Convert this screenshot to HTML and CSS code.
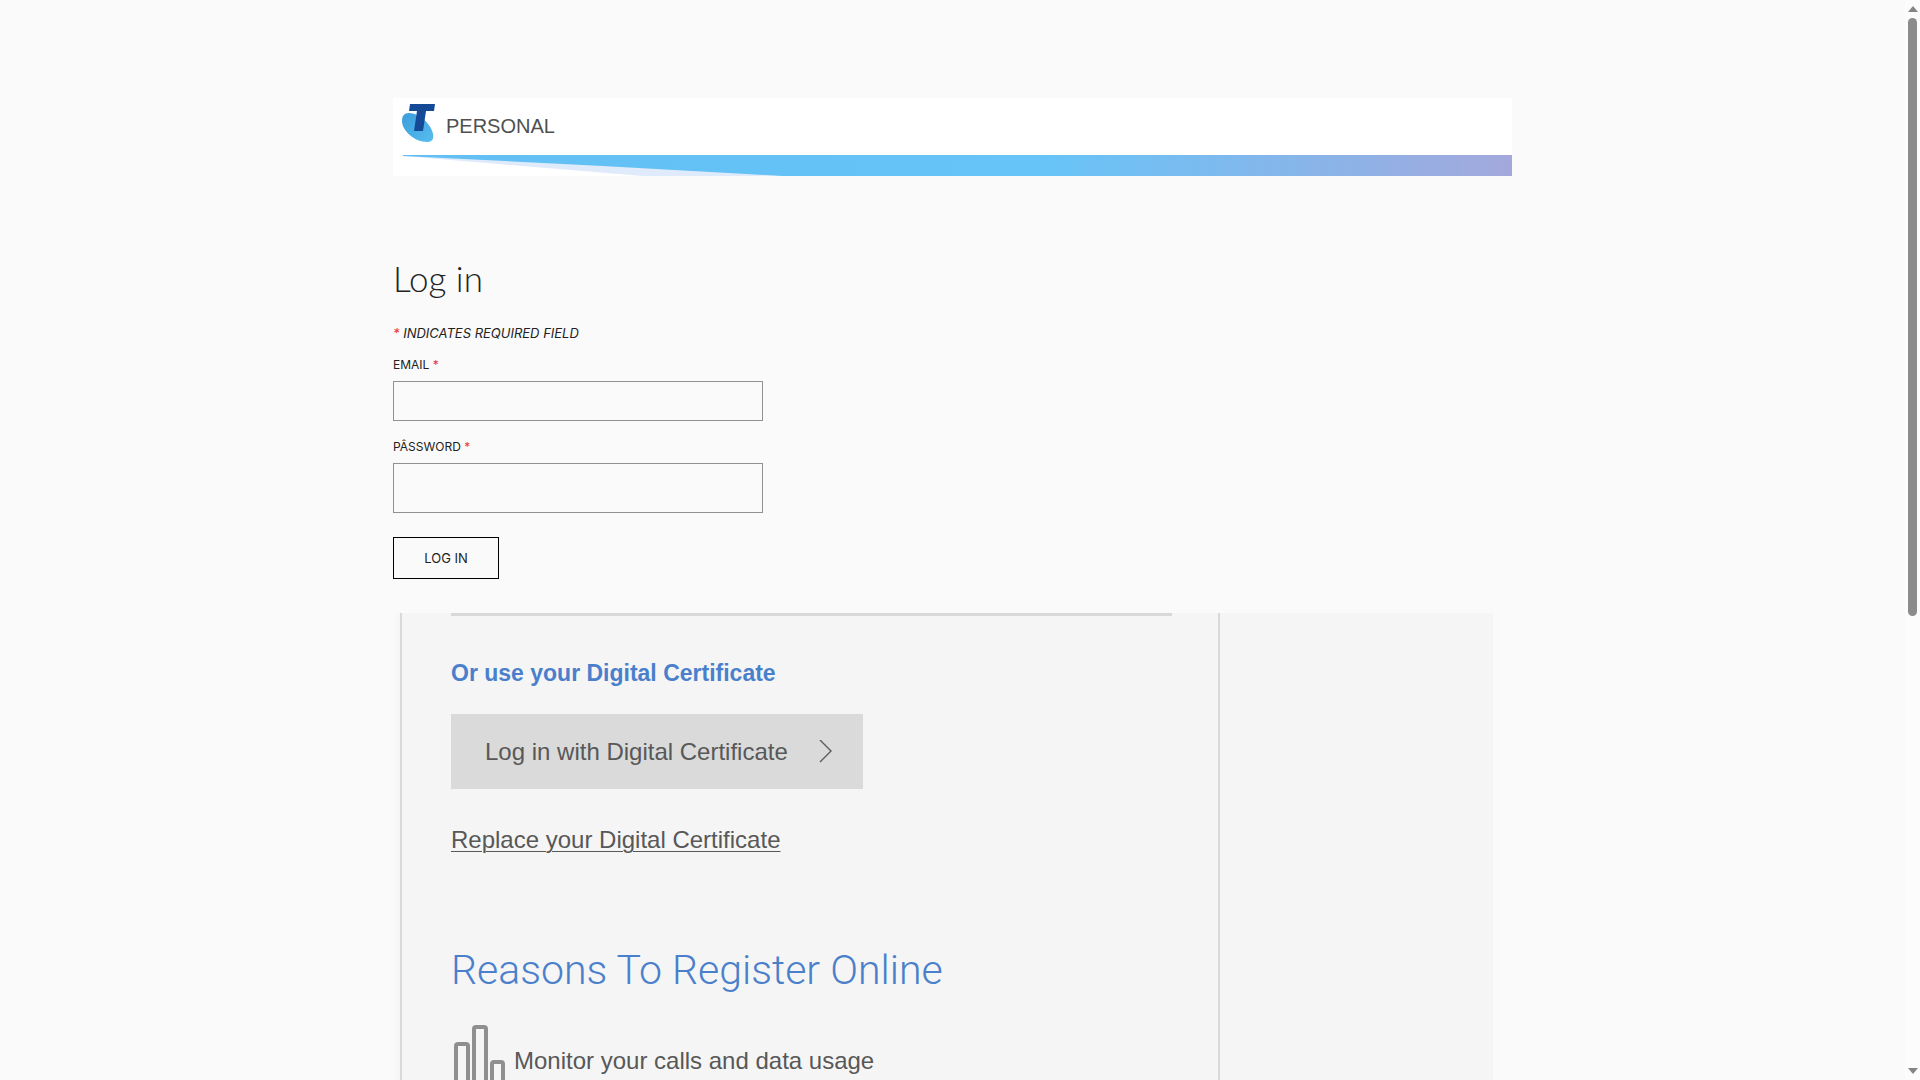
FILE: index.html
```html
<!DOCTYPE html>
<html lang="en">
<head>
<meta charset="utf-8">
<meta name="viewport" content="width=device-width, initial-scale=1">
<title>Log in</title>
<link rel="stylesheet" href="styles.css">
</head>
<body>
<div class="viewport">
  <div class="page">
    <header class="banner">
      <div class="brand">
        <svg class="logo" viewBox="0 0 34 40" aria-hidden="true">
          <defs>
            <linearGradient id="disc" x1="0" y1="0" x2="1" y2="1">
              <stop offset="0" stop-color="#3d9ddb"/>
              <stop offset="1" stop-color="#55bdf0"/>
            </linearGradient>
          </defs>
          <path fill="url(#disc)" d="M7 9C2 9 0 12 0 17C0 27 13 38 25 38C30 38 32 35 31 30C29 20 17 9 7 9Z"/>
          <path fill="#154a97" d="M8 0H33L32 7H24L21 27H12L15 7H7Z"/>
        </svg>
        <span class="brand-name">PERSONAL</span>
      </div>
      <svg class="ribbon" viewBox="0 0 1120 21" preserveAspectRatio="none" aria-hidden="true">
        <defs>
          <linearGradient id="band" x1="0" y1="0" x2="1" y2="0">
            <stop offset="0" stop-color="#61bff4"/>
            <stop offset="0.57" stop-color="#66c4f8"/>
            <stop offset="0.83" stop-color="#8ab4e8"/>
            <stop offset="1" stop-color="#a4a8dc"/>
          </linearGradient>
        </defs>
        <path fill="#dfeafa" d="M10 1L250 21H400V1Z"/>
        <path fill="url(#band)" d="M10 0H1120V21H390L210 11L10 1Z"/>
      </svg>
    </header>

    <main>
      <form class="login">
        <h1 class="title">Log in</h1>
        <p class="hint"><span class="req">*</span> INDICATES REQUIRED FIELD</p>
        <label class="label" for="email">EMAIL <span class="req">*</span></label>
        <input class="field" id="email" type="email">
        <label class="label" for="password">PÂSSWORD <span class="req">*</span></label>
        <input class="field field-tall" id="password" type="password">
        <button class="submit" type="submit">LOG IN</button>
      </form>

      <section class="panel">
        <div class="panel-body">
          <hr class="rule">
          <h2 class="cert-title">Or use your Digital Certificate</h2>
          <button class="cert-button" type="button">
            <span>Log in with Digital Certificate</span>
            <svg class="chevron" viewBox="0 0 14 24" aria-hidden="true"><path d="M1 0L12 11L1 22" fill="none" stroke="#5a5a5a" stroke-width="1.4"/></svg>
          </button>
          <a class="cert-link" href="#replace">Replace your Digital Certificate</a>
          <h2 class="reasons-title">Reasons To Register Online</h2>
          <div class="reason">
            <svg class="bars" viewBox="0 0 54 66" fill="none" stroke="#8f8f8f" stroke-width="4" aria-hidden="true">
              <rect x="5" y="20" width="12" height="40" rx="2"/>
              <rect x="23" y="3" width="12" height="57" rx="2"/>
              <rect x="41" y="38" width="11" height="22" rx="2"/>
            </svg>
            <span>Monitor your calls and data usage</span>
          </div>
        </div>
      </section>
    </main>
  </div>
  <div class="scrollbar" aria-hidden="true">
    <svg class="arrow" viewBox="0 0 10 6"><path fill="#858585" d="M5 0L10 6H0Z"/></svg>
    <div class="track"><div class="thumb"></div></div>
    <svg class="arrow" viewBox="0 0 10 6"><path fill="#858585" d="M0 0H10L5 6Z"/></svg>
  </div>
</div>
</body>
</html>
```

FILE: styles.css
```css
* {
  box-sizing: border-box;
}

body {
  margin: 0;
  background: #fafafa;
  color: #222;
  font-family: "Liberation Sans", Arial, sans-serif;
}

.viewport {
  display: flex;
  height: 100vh;
  overflow: hidden;
}

.page {
  flex: 1;
  min-width: 0;
  padding: 98px 24px 0;
}

.banner,
main {
  max-width: 1119px;
  margin: 0 auto;
}

.banner {
  background: #fff;
}

.brand {
  display: flex;
  gap: 10px;
  height: 57px;
  padding: 6px 9px 0;
}

.logo {
  width: 34px;
  height: 40px;
}

.brand-name {
  color: #505050;
  font-size: 20px;
  line-height: 45px;
}

.ribbon {
  display: block;
  width: 100%;
  height: 21px;
}

.login {
  display: flex;
  flex-direction: column;
  align-items: flex-start;
  padding-top: 81px;
  font-family: Inter, sans-serif;
}

.title {
  margin: 0 0 26px;
  font-family: Lato, sans-serif;
  font-size: 35px;
  font-weight: 300;
  line-height: 42px;
}

.hint {
  margin: 0 0 16px;
  font-size: 13px;
  font-style: italic;
  line-height: 16px;
}

.req {
  color: #f0303c;
}

.label {
  margin-bottom: 8px;
  font-size: 12px;
  line-height: 16px;
}

.field {
  width: 370px;
  max-width: 100%;
  height: 40px;
  margin-bottom: 18px;
  padding: 0 12px;
  border: 1px solid #919191;
  border-radius: 0;
  background: transparent;
  font: inherit;
}

.field-tall {
  height: 50px;
  margin-bottom: 24px;
}

.submit {
  min-width: 106px;
  height: 42px;
  padding: 0 30px;
  border: 1px solid #000;
  background: transparent;
  color: #222;
  font-family: Inter, sans-serif;
  font-size: 13px;
}

.panel {
  max-width: 1100px;
  margin-top: 34px;
  padding-left: 7px;
  background: linear-gradient(to right, #fafafa, #f5f5f5 8px);
}

.panel-body {
  width: 75%;
  padding: 0 46px 40px 49px;
  border: 2px solid #d9d9d9;
  border-width: 0 2px;
  color: #585858;
  font-size: 24px;
}

.rule {
  height: 3px;
  margin: 0;
  border: 0;
  background: #d9d9d9;
}

.cert-title {
  margin: 40px 0 24px;
  color: #4a80cb;
  font-size: 23px;
  line-height: 34px;
}

.cert-button {
  display: flex;
  align-items: center;
  justify-content: space-between;
  width: 412px;
  max-width: 100%;
  height: 75px;
  padding: 0 30px 0 34px;
  border: 0;
  background: #dadada;
  color: #585858;
  font: inherit;
}

.chevron {
  width: 14px;
  height: 24px;
}

.cert-link {
  display: inline-block;
  margin-top: 35px;
  color: #585858;
  line-height: 32px;
  text-decoration-thickness: 1px;
  text-underline-offset: 3px;
}

.reasons-title {
  margin: 86px 0 26px;
  color: #4a80cb;
  font-family: Roboto, sans-serif;
  font-size: 41px;
  font-weight: 300;
  line-height: 56px;
}

.reason {
  display: flex;
  gap: 9px;
  line-height: 74px;
}

.bars {
  width: 54px;
  height: 66px;
}

.scrollbar {
  display: flex;
  flex-direction: column;
  align-items: center;
  width: 15px;
  padding: 6px 0;
  background: #fcfcfc;
}

.arrow {
  width: 10px;
  height: 6px;
}

.track {
  flex: 1;
  padding: 6px 0;
}

.thumb {
  width: 9px;
  height: 57.3%;
  border-radius: 5px;
  background: #8b8b8b;
}
```
